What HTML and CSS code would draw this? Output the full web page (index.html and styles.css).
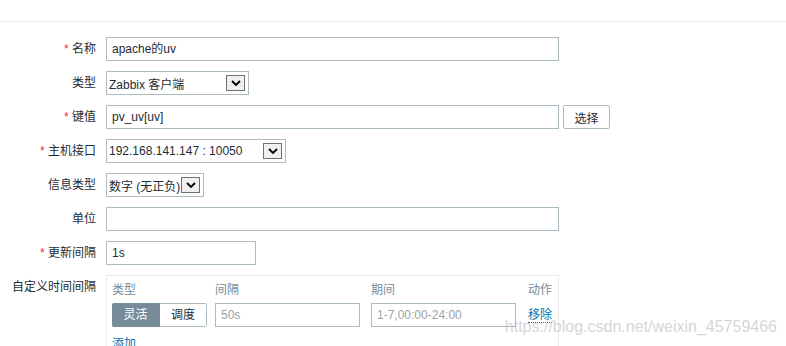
FILE: index.html
```html
<!DOCTYPE html>
<html lang="zh-CN">
<head>
  <meta charset="UTF-8">
  <title>监控项</title>
  <link rel="stylesheet" href="styles.css">
</head>
<body>
  <div class="top-bar"></div> <!-- 顶部分隔线 -->
  <form class="item-form">
    <div class="form-row">
      <label class="form-label"><span class="req">*</span> 名称</label>
      <div class="field"><div class="text-input wide">apache的uv</div></div>
    </div>
    <div class="form-row">
      <label class="form-label">类型</label>
      <div class="field">
        <div class="select-box type-select">Zabbix 客户端<span class="drop"><svg width="10" height="6" viewBox="0 0 10 6"><path d="M1 1 L5 5 L9 1" fill="none" stroke="#000" stroke-width="1.8"/></svg></span></div>
      </div>
    </div>
    <div class="form-row">
      <label class="form-label"><span class="req">*</span> 键值</label>
      <div class="field">
        <div class="text-input wide">pv_uv[uv]</div>
        <button type="button" class="btn-select">选择</button>
      </div>
    </div>
    <div class="form-row">
      <label class="form-label"><span class="req">*</span> 主机接口</label>
      <div class="field">
        <div class="select-box host-select">192.168.141.147 : 10050<span class="drop"><svg width="10" height="6" viewBox="0 0 10 6"><path d="M1 1 L5 5 L9 1" fill="none" stroke="#000" stroke-width="1.8"/></svg></span></div>
      </div>
    </div>
    <div class="form-row">
      <label class="form-label">信息类型</label>
      <div class="field">
        <div class="select-box info-select">数字 (无正负)<span class="drop"><svg width="10" height="6" viewBox="0 0 10 6"><path d="M1 1 L5 5 L9 1" fill="none" stroke="#000" stroke-width="1.8"/></svg></span></div>
      </div>
    </div>
    <div class="form-row">
      <label class="form-label">单位</label>
      <div class="field"><div class="text-input wide"></div></div>
    </div>
    <div class="form-row">
      <label class="form-label"><span class="req">*</span> 更新间隔</label>
      <div class="field"><div class="text-input short">1s</div></div>
    </div>
    <div class="form-row">
      <label class="form-label">自定义时间间隔</label>
      <div class="field">
        <div class="interval-box">
          <div class="interval-grid">
            <div class="col-head">类型</div>
            <div class="col-head">间隔</div>
            <div class="col-head">期间</div>
            <div class="col-head">动作</div>
            <div class="radio-group">
              <span class="radio-btn active">灵活</span><span class="radio-btn">调度</span>
            </div>
            <div><div class="text-input small placeholder">50s</div></div>
            <div><div class="text-input small placeholder">1-7,00:00-24:00</div></div>
            <div class="link-cell"><a class="link dotted">移除</a></div>
          </div>
          <a class="link add-link">添加</a>
        </div>
      </div>
    </div>
  </form>
  <div class="watermark">https://blog.csdn.net/weixin_45759466</div> <!-- 水印 -->
</body>
</html>
```

FILE: styles.css
```css
* {
  box-sizing: border-box;
}

body {
  margin: 0;
  background: #fff;
  color: #1f2c33;
  font-family: Arial, "Liberation Sans", "Noto Sans CJK SC", sans-serif;
  font-size: 12px;
  height: 346px;
  overflow: hidden;
  position: relative;
}

/* 顶部分隔线 */
.top-bar {
  height: 22px;
  border-bottom: 1px solid #ebebeb;
}

.item-form {
  padding-top: 15px;
}

.form-row {
  display: flex;
  gap: 10px;
  margin-bottom: 10px;
}

.form-label {
  width: 96px;
  text-align: right;
  line-height: 24px;
  white-space: nowrap;
}

.req {
  color: #e33734;
}

.field {
  display: flex;
  gap: 4px;
  align-items: flex-start;
}

.text-input {
  height: 24px;
  line-height: 22px;
  border: 1px solid #acbbc2;
  padding: 0 5px;
  background: #fff;
  white-space: nowrap;
  overflow: hidden;
}

.wide {
  width: 453px;
}

.short {
  width: 150px;
}

.small {
  width: 145px;
}

.placeholder {
  color: #9aa5ab;
}

.btn-select {
  height: 24px;
  width: 47px;
  padding: 0;
  border: 1px solid #acbbc2;
  border-radius: 2px;
  background: #fff;
  color: #1f2c33;
  font: inherit;
}

/* 下拉框 */
.select-box {
  height: 24px;
  border: 1px solid #acbbc2;
  display: flex;
  align-items: center;
  justify-content: space-between;
  padding: 0 3px 0 2px;
  white-space: nowrap;
}

.type-select {
  width: 143px;
}

.host-select {
  width: 180px;
}

.info-select {
  width: 98px;
  padding-right: 3px;
}

.drop {
  width: 19px;
  height: 16px;
  border: 1px solid #707070;
  background: #f0f0f0;
  display: flex;
  align-items: center;
  justify-content: center;
}

/* 自定义时间间隔 */
.interval-box {
  width: 453px;
  height: 80px;
  border: 1px solid #ebebeb;
  padding: 5px 0 0 5px;
}

.interval-grid {
  display: grid;
  grid-template-columns: 103px 156px 157px auto;
  row-gap: 4px;
}

.col-head {
  color: #768d99;
  line-height: 18px;
}

.radio-group {
  display: flex;
}

.radio-btn {
  width: 47px;
  height: 24px;
  line-height: 22px;
  text-align: center;
  border: 1px solid #acbbc2;
  border-left: none;
}

.radio-btn.active {
  width: 48px;
  background: #768d99;
  border-color: #768d99;
  color: #fff;
  border-radius: 2px 0 0 2px;
}

.radio-btn:last-child {
  border-radius: 0 2px 2px 0;
}

.link-cell {
  line-height: 24px;
}

.link {
  color: #0275b8;
}

.dotted {
  border-bottom: 1px dotted #0275b8;
}

.add-link {
  display: block;
  margin-top: 7px;
}

/* 水印 */
.watermark {
  position: absolute;
  right: 9px;
  top: 318px;
  font-size: 16px;
  color: rgba(190, 190, 190, 0.65);
  pointer-events: none;
}
```
